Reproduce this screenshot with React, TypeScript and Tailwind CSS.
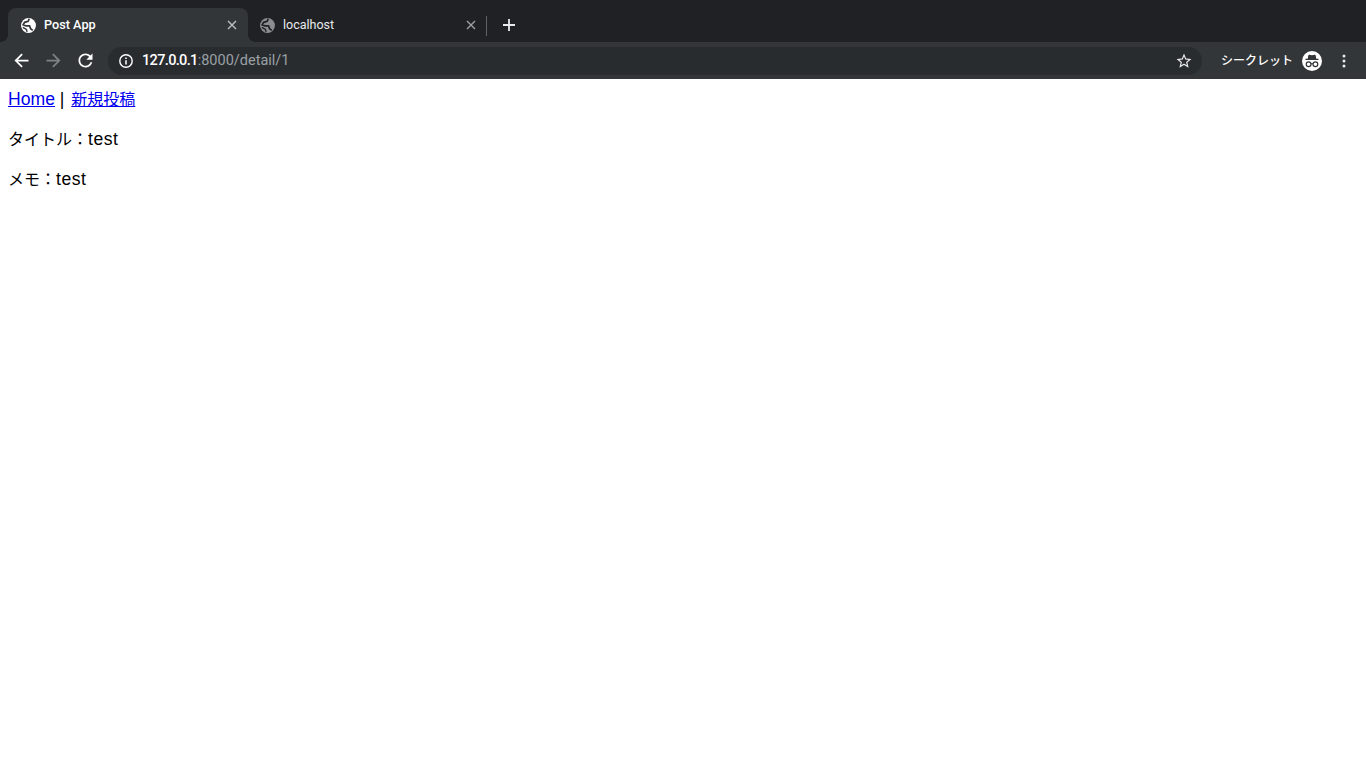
const Globe = ({ className, hole }: { className: string; hole: string }) => (
  <svg viewBox="0 0 24 24" className={className}>
    <circle cx="12" cy="12" r="10.500" fill="currentColor" />
    <path d="M13 2.500l-1.500 3.500-5 1.500-2 3.500 4 1.500h5l1.500 4 3 2.500" fill="none" stroke={hole} strokeWidth="2.400" />
    <path d="M4 14.500l5 3 1 3.500" fill="none" stroke={hole} strokeWidth="2" />
  </svg>
);

const Close = ({ className }: { className: string }) => (
  <svg viewBox="0 0 10 10" className={className} fill="none" stroke="currentColor" strokeWidth="1.4">
    <path d="M1 1l8 8M9 1l-8 8" />
  </svg>
);

export default function App() {
  return (
    <div className="min-h-screen bg-white font-['Liberation_Sans','Noto_Sans_CJK_JP',sans-serif]">
      <div className="flex h-[42px] items-end bg-[#202124] pl-2 font-['Roboto','Noto_Sans_CJK_JP',sans-serif]">
        <div className="relative flex h-[34px] w-[240px] items-center rounded-t-lg bg-[#323639] pl-[11.5px] pr-[11px] text-white">
          <div className="absolute bottom-0 left-[-8px] h-2 w-2 bg-[radial-gradient(circle_at_0_0,transparent_8px,#323639_8px)]" />
          <div className="absolute bottom-0 right-[-8px] h-2 w-2 bg-[radial-gradient(circle_at_100%_0,transparent_8px,#323639_8px)]" />
          <Globe className="h-[17px] w-[17px] text-white" hole="#323639" />
          <span className="ml-[7.5px] flex-1 text-[12.7px] font-medium">Post App</span>
          <Close className="h-[10px] w-[10px] text-[#bdc1c6]" />
        </div>
        <div className="flex h-[34px] w-[238px] items-center pl-[10.5px] pr-[10px] text-[#e8eaed]">
          <Globe className="h-[17px] w-[17px] text-[#8a8d91]" hole="#202124" />
          <span className="ml-[7.5px] flex-1 text-[12.5px]">localhost</span>
          <Close className="h-[10px] w-[10px] text-[#9aa0a6]" />
        </div>
        <div className="mb-[6px] h-5 w-px bg-[#5f6368]" />
        <svg viewBox="0 0 14 14" className="mb-[10px] ml-[15px] h-[14px] w-[14px] text-[#e8eaed]" fill="none" stroke="currentColor" strokeWidth="1.8">
          <path d="M7 1v12M1 7h12" />
        </svg>
      </div>
      <div className="flex h-[37px] items-center bg-[#323639] pl-[11px] pr-5">
        <svg viewBox="0 0 24 24" className="h-[21px] w-[21px] text-white" fill="currentColor">
          <path d="M20 11H7.830l5.590-5.590L12 4l-8 8 8 8 1.410-1.410L7.830 13H20v-2z" />
        </svg>
        <svg viewBox="0 0 24 24" className="ml-[11px] h-[21px] w-[21px] text-[#7f8285]" fill="currentColor">
          <path d="M4 11h12.170l-5.590-5.590L12 4l8 8-8 8-1.410-1.410L16.170 13H4v-2z" />
        </svg>
        <svg viewBox="0 0 24 24" className="ml-[11px] h-[21px] w-[21px] text-white" fill="currentColor">
          <path d="M17.650 6.350C16.200 4.900 14.210 4 12 4c-4.420 0-7.990 3.580-7.990 8s3.570 8 7.990 8c3.730 0 6.840-2.550 7.730-6h-2.080c-.820 2.330-3.040 4-5.650 4-3.310 0-6-2.690-6-6s2.690-6 6-6c1.660 0 3.140.690 4.220 1.780L13 11h7V4l-2.350 2.350z" />
        </svg>
        <div className="ml-3 flex h-7 flex-1 items-center rounded-full bg-[#292c2f] pl-[11px] pr-[9px]">
          <svg viewBox="0 0 14 14" className="h-[14px] w-[14px] text-white" fill="none" stroke="currentColor">
            <circle cx="7" cy="7" r="6.200" strokeWidth="1.400" />
            <path d="M7 6.200v4.200M7 3.400v1.600" strokeWidth="1.500" />
          </svg>
          <span className="ml-[9px] flex-1 font-['Roboto',sans-serif] text-[14.5px] text-[#9aa0a6]">
            <span className="font-medium tracking-[-0.65px] text-white">127.0.0.1</span>:8000/detail/1
          </span>
          <svg viewBox="0 0 24 24" className="h-[18px] w-[18px] text-[#e8eaed]" fill="currentColor">
            <path d="M22 9.240l-7.190-.620L12 2 9.190 8.630 2 9.240l5.460 4.730L5.820 21 12 17.270 18.180 21l-1.630-7.030L22 9.240zM12 15.400l-3.760 2.270 1-4.280-3.320-2.880 4.380-.380L12 6.100l1.710 4.040 4.380.380-3.320 2.880 1 4.280L12 15.400z" />
          </svg>
        </div>
        <span className="ml-[19px] pb-[2px] font-['Noto_Sans_CJK_JP',sans-serif] text-xs font-medium text-white">シークレット</span>
        <svg viewBox="0 0 20 20" className="ml-[9px] h-5 w-5">
          <circle cx="10" cy="10" r="10" fill="#ffffff" />
          <path d="M6.300 4.600c.1-.6.5-.9 1-.8l2.700.5 2.700-.5c.5-.1.9.2 1 .8l.6 3.200h2.200v1.300H3.500V7.800h2.200z" fill="#323639" />
          <circle cx="6.600" cy="13.300" r="2.400" fill="none" stroke="#323639" strokeWidth="1.200" />
          <circle cx="13.400" cy="13.300" r="2.400" fill="none" stroke="#323639" strokeWidth="1.200" />
          <path d="M9 12.800h2" stroke="#323639" strokeWidth="1.100" />
        </svg>
        <svg viewBox="0 0 4 14" className="ml-[20px] h-[14px] w-1 text-[#e8eaed]" fill="currentColor">
          <circle cx="2" cy="2" r="1.500" />
          <circle cx="2" cy="7" r="1.500" />
          <circle cx="2" cy="12" r="1.500" />
        </svg>
      </div>
      <div className="px-2 pb-2 pt-[9px] text-[17.6px] leading-[22px] text-black">
        <div>
          <a href="#" className="text-[#0000ee] underline">Home</a> | <a href="#" className="ml-0.5 text-base text-[#0000ee] underline">新規投稿</a>
        </div>
        <p className="mt-4"><span className="text-base">タイトル：</span><span className="tracking-[0.5px]">test</span></p>
        <p className="mt-4"><span className="text-base">メモ：</span><span className="tracking-[0.5px]">test</span></p>
      </div>
    </div>
  );
}
